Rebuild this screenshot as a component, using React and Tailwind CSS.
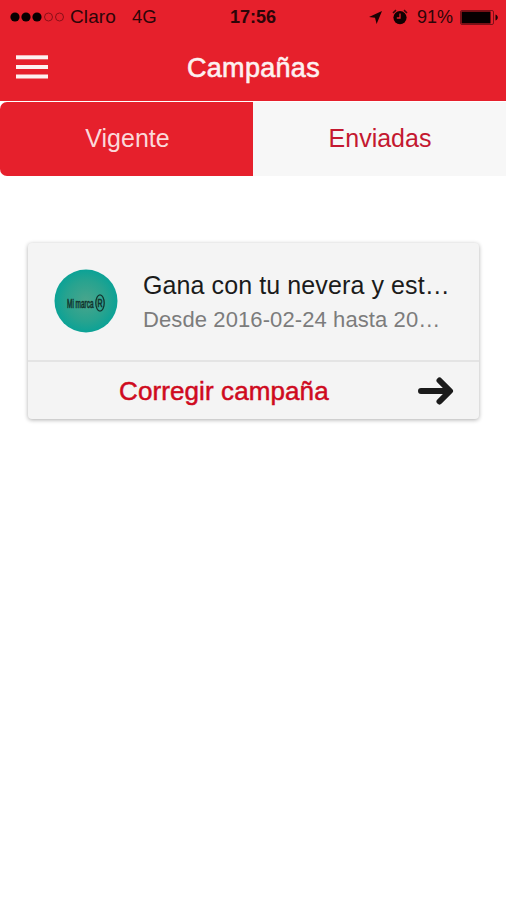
import { useState } from "react";

const campaigns = [
  {
    id: 1,
    title: "Gana con tu nevera y est…",
    dates: "Desde 2016-02-24 hasta 20…",
    action: "Corregir campaña",
  },
];

const StatusBar = () => (
  <div className="grid h-[34px] grid-cols-3 items-center pl-[10px] pr-[8px] text-[#2d0508]">
    <div className="flex items-center">
      <svg width="55" height="10" viewBox="0 0 55 10">
        <circle cx="5" cy="5" r="4.6" fill="#090001" />
        <circle cx="16" cy="5" r="4.6" fill="#090001" />
        <circle cx="27" cy="5" r="4.6" fill="#090001" />
        <circle cx="38.5" cy="5" r="4" fill="none" stroke="#8a1018" />
        <circle cx="49.5" cy="5" r="4" fill="none" stroke="#8a1018" />
      </svg>
      <span className="ml-[5px] text-[19px] tracking-[0.1px]">Claro</span>
      <span className="ml-[16px] text-[18.5px]">4G</span>
    </div>
    <div className="pr-[2px] text-center text-[18px] font-bold">17:56</div>
    <div className="flex items-center justify-end">
      <svg width="13" height="13" viewBox="0 0 13 13">
        <path d="M13 0 L0 6 L6 6.8 L7.6 13 Z" fill="#1c0204" />
      </svg>
      <svg className="ml-[10px]" width="16" height="16" viewBox="0 0 16 16">
        <circle cx="8" cy="8.6" r="6.6" fill="#120102" />
        <path d="M1 4 L4 1.2 M15 4 L12 1.2" stroke="#3c070b" strokeWidth="1.6" />
        <path d="M8 4.6 V9 H4.8" fill="none" stroke="#e6202c" strokeWidth="1.3" />
      </svg>
      <span className="ml-[9px] text-[18px]">91%</span>
      <svg className="ml-[7px]" width="38" height="15" viewBox="0 0 38 15">
        <rect x="0.5" y="0.5" width="33" height="14" rx="1.5" fill="none" stroke="#7c1018" />
        <rect x="1.5" y="1.5" width="29" height="12" fill="#060001" />
        <path d="M35.5 4.5 C38.5 5.5 38.5 9.5 35.5 10.5 Z" fill="#1c0204" />
      </svg>
    </div>
  </div>
);

const Header = () => (
  <div className="grid h-[66px] grid-cols-3 items-center px-4">
    <button>
      <svg width="32" height="24" viewBox="0 0 32 24" fill="#fdf1f1">
        <rect y="0.3" width="32" height="4" />
        <rect y="10" width="32" height="4" />
        <rect y="19.5" width="32" height="4" />
      </svg>
    </button>
    <h1 className="pl-px pt-px text-center text-[27px] leading-[30px] tracking-[0.3px] text-[#fdf1f1] [-webkit-text-stroke:0.6px]">
      Campañas
    </h1>
  </div>
);

const BrandLogo = () => (
  <svg className="shrink-0" width="64" height="64" viewBox="0 0 64 64">
    <defs>
      <radialGradient id="brand">
        <stop offset="0" stopColor="#4aa58c" />
        <stop offset="0.65" stopColor="#27a38f" />
        <stop offset="1" stopColor="#0ba296" />
      </radialGradient>
    </defs>
    <circle cx="32" cy="32" r="31.5" fill="url(#brand)" />
    <g fill="#12352f" stroke="#12352f">
      <text transform="translate(13 38.5) scale(0.54 1)" fontSize="12" strokeWidth="0.6">
        Mi marca
      </text>
      <text transform="translate(43.6 37.5) scale(0.7 1)" fontSize="10" strokeWidth="0.6">
        R
      </text>
    </g>
    <ellipse cx="46" cy="34" rx="4.2" ry="8.2" fill="none" stroke="#12352f" strokeWidth="1.3" />
  </svg>
);

const CampaignCard = ({ campaign }) => (
  <div className="ml-[28px] mr-[27px] mt-[67px] overflow-hidden rounded-[4px] bg-[#f4f4f4] shadow-[0_1px_4px_rgba(0,0,0,0.32)]">
    <div className="flex h-[119px] items-start border-b-2 border-[#e4e4e4] pl-[26px] pt-[26px]">
      <BrandLogo />
      <div className="ml-[25px] whitespace-nowrap">
        <h2 className="-mt-px text-[25px] leading-[34px] tracking-[0.1px] text-[#1b1b1b]">{campaign.title}</h2>
        <p className="pt-px text-[22px] leading-[34px] tracking-[0.1px] text-[#7c7c7c]">{campaign.dates}</p>
      </div>
    </div>
    <button className="flex h-[57px] w-full items-center pl-[91px] pr-[25px]">
      <span className="text-[26px] leading-[30px] tracking-[0.1px] text-[#cf0a20] [-webkit-text-stroke:0.5px]">
        {campaign.action}
      </span>
      <svg className="ml-auto" width="36" height="28" viewBox="0 0 36 28">
        <path
          d="M3 14 H31 M21.5 3.5 L32 14 L21.5 24.5"
          fill="none"
          stroke="#1b1b1b"
          strokeWidth="6"
          strokeLinecap="round"
          strokeLinejoin="round"
        />
      </svg>
    </button>
  </div>
);

const App = () => {
  const [tab, setTab] = useState("vigente");

  const tabClass = (name) =>
    tab === name
      ? "w-1/2 rounded-l-[7px] bg-[#e6202c] pl-[2px] text-[#fbd9da]"
      : "w-1/2 bg-[#f7f7f7] pl-px text-[#c41830]";

  return (
    <div className="min-h-screen bg-white font-['Liberation_Sans',Arial,sans-serif]">
      <div className="h-[101px] bg-[#e6202c]">
        <StatusBar />
        <Header />
      </div>
      <div className="flex h-[75px] pt-px text-[25px]">
        <button className={tabClass("vigente")} onClick={() => setTab("vigente")}>
          Vigente
        </button>
        <button className={tabClass("enviadas")} onClick={() => setTab("enviadas")}>
          Enviadas
        </button>
      </div>
      {campaigns.map((campaign) => (
        <CampaignCard key={campaign.id} campaign={campaign} />
      ))}
    </div>
  );
};

export default App;
